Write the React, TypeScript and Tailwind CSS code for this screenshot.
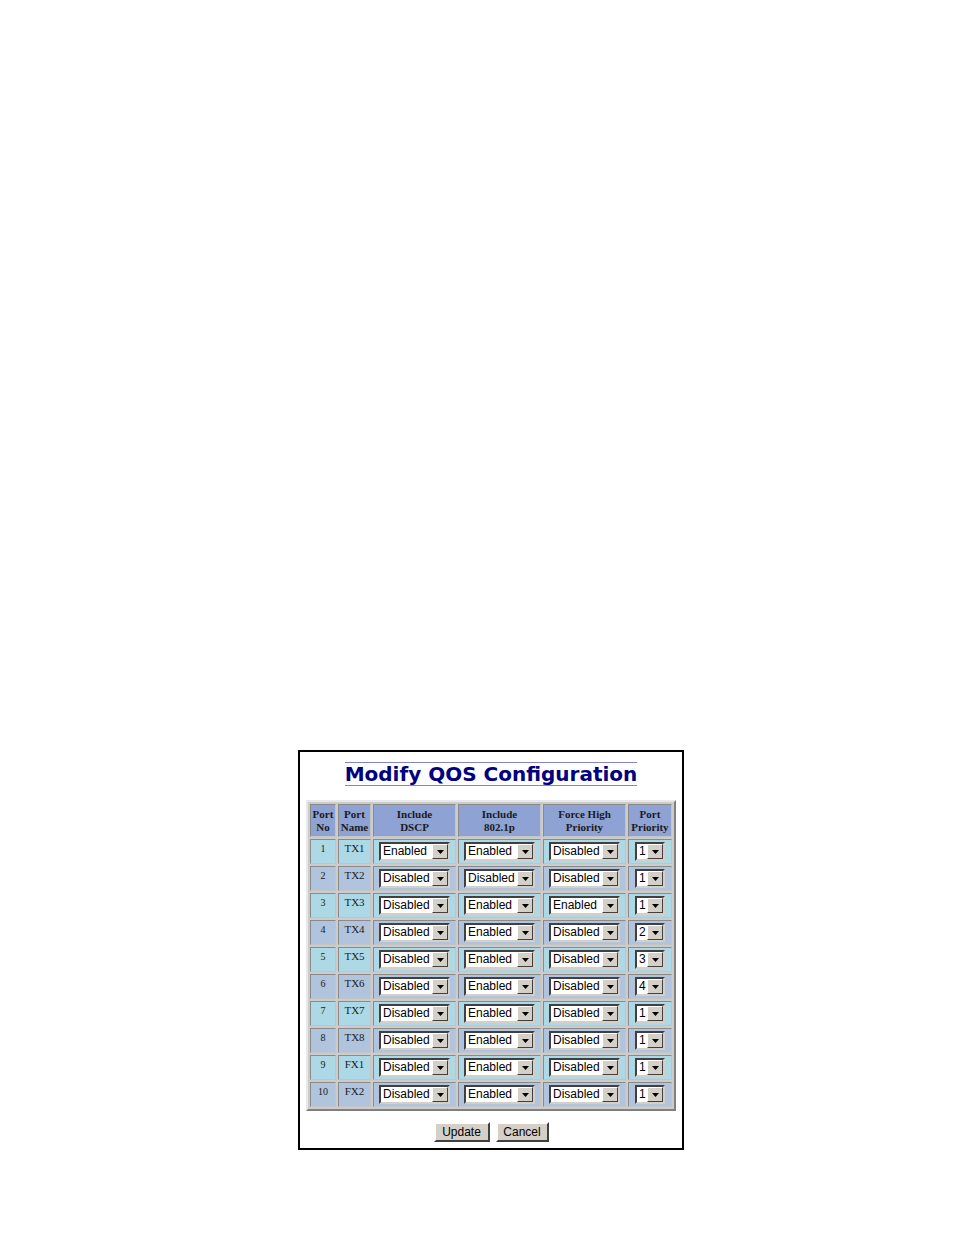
import React from "react";

type PortRow = {
  no: number;
  name: string;
  dscp: string;
  p8021: string;
  force: string;
  prio: string;
};

const rows: PortRow[] = [
  { no: 1, name: "TX1", dscp: "Enabled", p8021: "Enabled", force: "Disabled", prio: "1" },
  { no: 2, name: "TX2", dscp: "Disabled", p8021: "Disabled", force: "Disabled", prio: "1" },
  { no: 3, name: "TX3", dscp: "Disabled", p8021: "Enabled", force: "Enabled", prio: "1" },
  { no: 4, name: "TX4", dscp: "Disabled", p8021: "Enabled", force: "Disabled", prio: "2" },
  { no: 5, name: "TX5", dscp: "Disabled", p8021: "Enabled", force: "Disabled", prio: "3" },
  { no: 6, name: "TX6", dscp: "Disabled", p8021: "Enabled", force: "Disabled", prio: "4" },
  { no: 7, name: "TX7", dscp: "Disabled", p8021: "Enabled", force: "Disabled", prio: "1" },
  { no: 8, name: "TX8", dscp: "Disabled", p8021: "Enabled", force: "Disabled", prio: "1" },
  { no: 9, name: "FX1", dscp: "Disabled", p8021: "Enabled", force: "Disabled", prio: "1" },
  { no: 10, name: "FX2", dscp: "Disabled", p8021: "Enabled", force: "Disabled", prio: "1" },
];

// old-style windows combo box
function Combo({ value, wide }: { value: string; wide?: boolean }) {
  return (
    <div
      className={`mx-auto flex h-[19px] ${wide ? "w-[71px]" : "w-[30px]"} border-2 border-t-[#404040] border-l-[#404040] border-b-[#d4d0c8] border-r-[#d4d0c8] bg-white`}
    >
      <span className="flex-1 overflow-hidden pl-[2px] text-left text-[12px] leading-[15px] text-black font-['Liberation_Sans',Arial,sans-serif]">
        {value}
      </span>
      <span className="flex h-[15px] w-[16px] items-center justify-center border border-t-white border-l-white border-b-[#404040] border-r-[#404040] bg-[#d4d0c8]">
        <svg width="7" height="4" viewBox="0 0 7 4">
          <path d="M0 0h7L3.5 4z" fill="#000" />
        </svg>
      </span>
    </div>
  );
}

const cell =
  "border border-t-[#8a8a8a] border-l-[#8a8a8a] border-b-[#c4c4c4] border-r-[#c4c4c4]";

export default function App() {
  return (
    <div className="min-h-[1235px] w-full bg-white pt-[750px]">
      <div className="ml-[298px] flex h-[400px] w-[386px] flex-col items-center border-2 border-black">
        <h1 className="mt-[10px] border-y border-[#8484c8] text-[20px] leading-[22px] font-bold text-[#000080] font-['DejaVu_Sans',Verdana,sans-serif]">
          Modify QOS Configuration
        </h1>

        <table className="mt-[14px] border-separate border-spacing-[2px] border-2 border-t-[#e8e8e8] border-l-[#e8e8e8] border-b-[#808080] border-r-[#808080] bg-[#cccccc] font-['Liberation_Serif','Times_New_Roman',serif]">
          <thead>
            <tr className="h-[33px] bg-[#8ea2d4] text-[11px] leading-[13px] font-bold text-[#1a1a1a]">
              <th className={`${cell} w-[26px] px-0`}>
                Port
                <br />
                No
              </th>
              <th className={`${cell} w-[33px] px-0`}>
                Port
                <br />
                Name
              </th>
              <th className={`${cell} w-[83px]`}>
                Include
                <br />
                DSCP
              </th>
              <th className={`${cell} w-[83px]`}>
                Include
                <br />
                802.1p
              </th>
              <th className={`${cell} w-[83px]`}>
                Force High
                <br />
                Priority
              </th>
              <th className={`${cell} w-[44px] px-0`}>
                Port
                <br />
                Priority
              </th>
            </tr>
          </thead>
          <tbody>
            {rows.map((r, i) => (
              <tr
                key={r.no}
                className={`h-[25px] ${i % 2 === 0 ? "bg-[#add8e6]" : "bg-[#b0c4de]"} text-center text-[#1a1a1a]`}
              >
                <td className={`${cell} pt-[3px] align-top text-[10px] leading-[12px]`}>{r.no}</td>
                <td className={`${cell} pt-[2px] align-top text-[11px] leading-[13px]`}>{r.name}</td>
                <td className={`${cell} align-middle`}>
                  <Combo value={r.dscp} wide />
                </td>
                <td className={`${cell} align-middle`}>
                  <Combo value={r.p8021} wide />
                </td>
                <td className={`${cell} align-middle`}>
                  <Combo value={r.force} wide />
                </td>
                <td className={`${cell} align-middle`}>
                  <Combo value={r.prio} />
                </td>
              </tr>
            ))}
          </tbody>
        </table>

        <div className="mt-[11px] flex gap-[6px] font-['Liberation_Sans',Arial,sans-serif]">
          <button className="h-[20px] w-[56px] border-2 border-t-white border-l-white border-b-[#404040] border-r-[#404040] bg-[#d4d0c8] text-[12px] leading-[14px] text-black">
            Update
          </button>
          <button className="h-[20px] w-[53px] border-2 border-t-white border-l-white border-b-[#404040] border-r-[#404040] bg-[#d4d0c8] text-[12px] leading-[14px] text-black">
            Cancel
          </button>
        </div>
      </div>
    </div>
  );
}
